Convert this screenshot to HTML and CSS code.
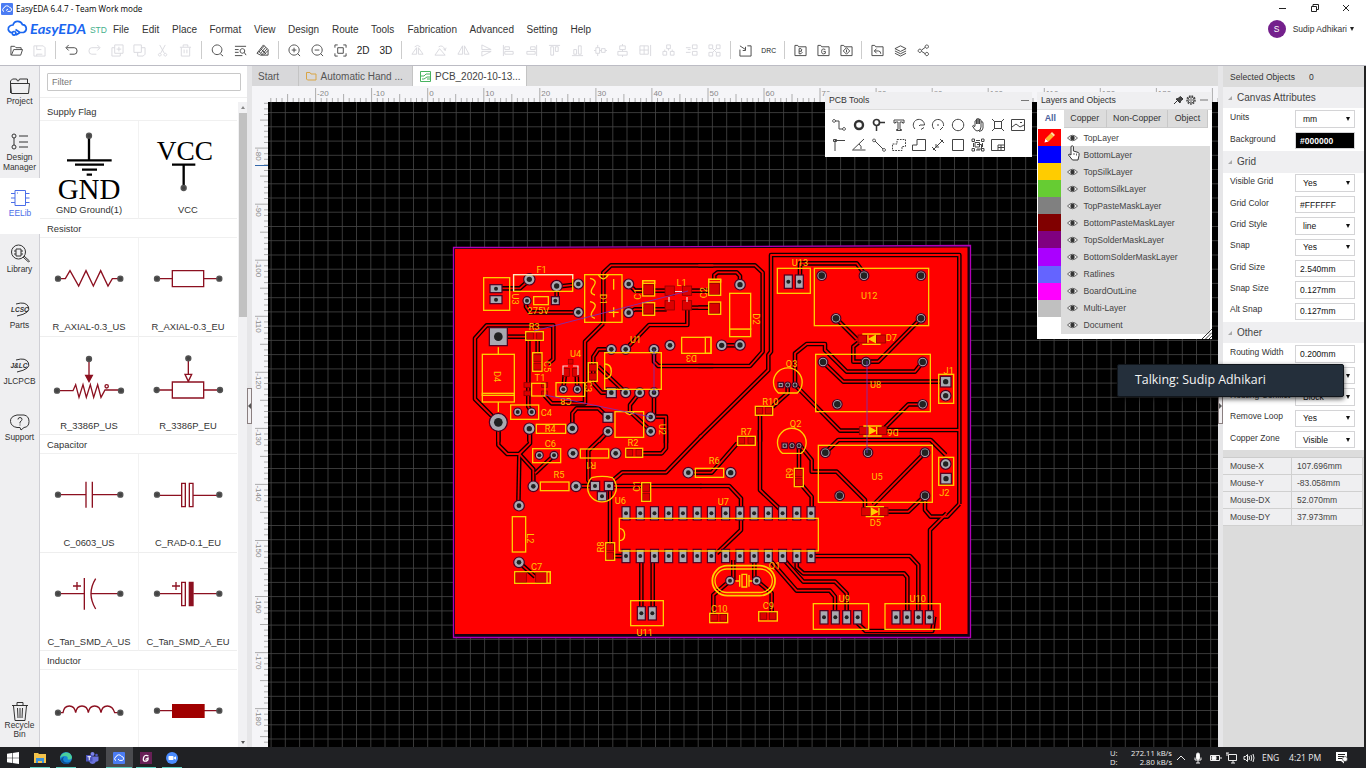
FILE: index.html
```html
<!DOCTYPE html>
<html lang="en">
<head>
<meta charset="utf-8">
<title>EasyEDA 6.4.7 - Team Work mode</title>
<link rel="stylesheet" href="styles.css">
</head>
<body>
<div class="app">
<header class="titlebar">
  <svg class="appicon" viewBox="0 0 12 12"><rect width="12" height="12" rx="1" fill="#4b7cf3"/><path d="M3 8.500a1.800 1.800 0 0 1 0-3.500 3 3 0 0 1 5.600-.5 2 2 0 0 1 .6 3.900H6.500M5 7.500l2-1.500" fill="none" stroke="#fff"/></svg>
  <span class="title">EasyEDA 6.4.7 - Team Work mode</span>
  <div class="winbtns"><svg width="80" height="14" viewBox="0 0 80 14" fill="none" stroke="#222"><path d="M0 6.500h7M32.500 4.500h5v5h-5zM34 4V2.500h5.500v5H38M64 3l6 6M70 3l-6 6"/></svg></div>
</header>
<nav class="menubar">
  <svg class="logo" viewBox="0 0 84 18"><path d="M7 12.500a3.800 3.800 0 0 1-4.500-5Q4 5 7 5a5 5 0 0 1 9.500-.3 4 4 0 0 1 1 7.800H14L9.500 9.500M8 11.500a1.800 1.800 0 1 0 .1 0M14 12.500l-4 2.500" fill="none" stroke="#1a66f0" stroke-width="1.700"/><text x="24" y="13.500" textLength="56" lengthAdjust="spacingAndGlyphs">EasyEDA</text></svg>
  <span class="std">STD</span>
  <div class="menus"><span style="width:29px">File</span><span style="width:30px">Edit</span><span style="width:37.500px">Place</span><span style="width:44.500px">Format</span><span style="width:34px">View</span><span style="width:44px">Design</span><span style="width:39px">Route</span><span style="width:36.500px">Tools</span><span style="width:62px">Fabrication</span><span style="width:57px">Advanced</span><span style="width:44px">Setting</span><span>Help</span></div>
  <div class="user"><b class="avatar">S</b><span>Sudip Adhikari</span><i class="tri"></i></div>
</nav>
<div class="toolbar" id="toolbar"></div>

<main class="main">
<aside class="rail" id="rail"></aside>
<section class="lib">
  <div class="filterbox"><div class="filter">Filter</div></div>
  <div class="libbody">
    <div class="liblist" id="liblist"></div>
    <div class="scroll"><i class="up"></i><div class="thumb"></div><i class="down"></i></div>
  </div>
</section>
<div class="split"><div class="handle"><i class="hl"></i></div></div>
<section class="center">
  <div class="tabs">
    <div class="tab t1">Start</div>
    <div class="tab t2"><svg width="11" height="10" viewBox="0 0 11 10"><path d="M.5 8V1.500h3.500l1 1.500H10v6H1.500z" fill="none" stroke="#d9a545"/></svg>Automatic Hand ...</div>
    <div class="tab on"><svg width="11" height="11" viewBox="0 0 11 11" fill="none" stroke="#48b35f"><path d="M.5.500h10v10H.5zM1 5h3l2-2h4M2 8h2l3-2h3M7 8h3"/></svg>PCB_2020-10-13...</div>
  </div>
  <div class="work">
    <svg id="board" width="966" height="661" viewBox="252 86 966 661"></svg>
    <div class="panel pcbtools">
      <div class="phead"><span>PCB Tools</span><i class="dash"></i></div>
      <div class="tools" id="tools"></div>
    </div>
    <div class="panel layers">
      <div class="phead"><span>Layers and Objects</span><svg class="pin" width="36" height="12" viewBox="0 0 36 12"><path d="M1 10l3-3M3 5l4 4 .5-2L10 5l-2.500-2.500L5 4.500z" stroke="#333" fill="#444"/><circle cx="18" cy="6" r="4" stroke="#444" fill="none" stroke-width="1.500" stroke-dasharray="1.700 1"/><circle cx="18" cy="6" r="3" stroke="#555" fill="none"/><circle cx="18" cy="6" r="1.300" stroke="#444" fill="none" stroke-width=".7"/><path d="M27 6h8" stroke="#777"/></svg></div>
      <div class="ltabs"><b>All</b><span class="w43">Copper</span><span class="w61">Non-Copper</span><span class="w39">Object</span></div>
      <div class="lrows" id="lrows"></div>
      <svg class="grip" width="10" height="10" viewBox="0 0 10 10"><path d="M0 10L10 0M3.500 10L10 3.500M7 10l3-3" stroke="#333"/></svg>
    </div>
    <svg class="cursor" width="14" height="18" viewBox="0 0 14 18"><path d="M4 9V2.500q1.200-1.500 2.400 0V7l5 1.500q1 .5.600 3l-1 4.500H5.500L1.500 11q0-2 2.500 0z" fill="#fff" stroke="#333"/><path d="M7 9v2M9.500 9.500v2" stroke="#666"/></svg>
  </div>
</section>
<div class="split s2"><div class="handle"><i class="hr"></i></div></div>
<aside class="props" id="props"></aside>
</main>

<div class="toast">Talking: Sudip Adhikari</div>

<footer class="taskbar">
  <div class="apps">
    <span class="task nou"><svg width="12" height="12" viewBox="0 0 12 12" fill="#fff"><path d="M0 1.700l5-.7v4.700H0zM5.600.9L12 0v5.700H5.600zM0 6.300h5V11l-5-.7zM5.600 6.300H12V12l-6.400-.9z"/></svg></span>
    <span class="task"><svg width="12" height="12" viewBox="0 0 12 12"><path d="M0 1h4l1 1h7v9H0z" fill="#f3c34c"/><path d="M2 6h8v5H8V9H4v2H2z" fill="#3c93dc"/></svg></span>
    <span class="task"><svg width="12" height="12" viewBox="0 0 12 12"><circle cx="6" cy="6" r="6" fill="#1686d8"/><path d="M0 6C1 0 10-2 12 5c0 3-4 3-4.500 2C9 4 4 2.500 0 6" fill="#4bcf9b"/><path d="M3 7c0 3 4 5 8 2-2 5-9 4-10-1 0-2 2-3 3-3" fill="#0d4f94"/></svg></span>
    <span class="task nou"><svg width="13" height="12" viewBox="0 0 13 12"><circle cx="6.500" cy="2" r="2" fill="#7b83eb"/><circle cx="10.500" cy="3" r="1.300" fill="#5059c9"/><path d="M3 4.500h9.500v4q-1 1.500-2.500 1-1 2.500-3.500 2.500T3 9z" fill="#6b73dd"/><rect y="3" width="6.500" height="6.500" fill="#4b53bc"/><path d="M1.500 4.700H5M3.250 4.700V8.300" stroke="#fff"/></svg></span>
    <span class="task cur"><svg width="12" height="12" viewBox="0 0 12 12"><rect width="12" height="12" rx="1" fill="#4b7cf3"/><path d="M3 8.500a1.800 1.800 0 0 1 0-3.500 3 3 0 0 1 5.600-.5 2 2 0 0 1 .6 3.900H6.500L5 7" fill="none" stroke="#fff"/></svg></span>
    <span class="task"><svg width="12" height="12" viewBox="0 0 12 12"><rect width="12" height="12" fill="#682057"/><path d="M8.500 4q-4-2-5 2t3 3q2-.5 1.500-3L5.500 7.500" fill="none" stroke="#fff" stroke-width="1.300"/></svg></span>
    <span class="task"><svg width="12" height="12" viewBox="0 0 12 12"><circle cx="6" cy="6" r="6" fill="#4a8cff"/><rect x="2.500" y="4" width="5" height="4" rx=".7" fill="#fff"/><path d="M8 5.500l2-1.300v3.600L8 6.500" fill="#fff"/></svg></span>
  </div>
  <div class="tray">
    <div class="net"><span>U:</span><span>272.11 kB/s</span><span>D:</span><span>2.80 kB/s</span></div>
    <svg width="78" height="14" viewBox="0 0 78 14" fill="none" stroke="#eee"><path d="M0 9l4-4 4 4"/><rect x="19.500" y="2" width="3" height="6.500" rx="1.500" fill="#fff"/><path d="M18 6.500v2.500h6V6.500M21 9v3M19 12h4M33.500 4.500h9v5h-9zM44 6v2"/><path d="M35 5.500h4v3h-4z" fill="#fff"/><path d="M51.500 3.500h8v6h-8zM54 12h4M56 10v2M50 2v3M49 2h3M67 5.500h1.500l2-2v7l-2-2H67zM72 5q1 2 0 4M74 4q1.500 3 0 6M76 3q2 4 0 8"/></svg>
    <span class="eng">ENG</span><span class="clock">4:21 PM</span>
    <svg class="notif" width="14" height="13" viewBox="0 0 14 13"><path d="M1 1h11v9H9v2.500L6 10H1z" fill="#fff"/><path d="M3 3.500h7M3 5.500h6M3 7.500h4" stroke="#222"/><circle cx="10" cy="8" r="2.500" fill="#fff" stroke="#222" stroke-width=".6"/></svg>
  </div>
</footer>
</div>
<script src="app.js"></script>
</body>
</html>
```

FILE: styles.css
```css
* { box-sizing: border-box; }
body { margin: 0; width: 1366px; height: 768px; overflow: hidden; background: #fff; font-family: "Liberation Sans", Arial, sans-serif; font-size: 10px; color: #333; }
.app { position: relative; width: 1366px; height: 768px; display: flex; flex-direction: column; overflow: hidden; }
svg { display: block; flex: none; }
.titlebar { height: 17px; display: flex; align-items: center; padding: 0 7px 0 1px; color: #000; }
.appicon { width: 12px; height: 12px; margin-right: 3px; }
.title { font: 8.100px "Open Sans", "Noto Sans", sans-serif; }
.winbtns { margin-left: auto; }
.menubar { height: 24px; display: flex; align-items: center; font-size: 10px; padding: 0 12px 0 6px; }
.logo { width: 84px; height: 18px; }
.logo text { font: italic bold 12.500px "Lato", sans-serif; fill: #1a66f0; }
.std { color: #45b08c; font-size: 8.500px; width: 23px; padding-top: 2px; letter-spacing: -.1px; }
.menus { display: flex; padding-top: 1px; }
.menus span { flex: none; }
.user { margin-left: auto; display: flex; align-items: center; font-size: 8.500px; padding-bottom: 1px; }
.avatar { width: 18px; height: 18px; border-radius: 9px; background: #74208c; color: #fff; font-weight: normal; text-align: center; line-height: 18px; margin-right: 7px; }
.tri { border: 2.500px solid transparent; border-top: 4px solid #222; border-bottom: 0; margin-left: 3px; }
.toolbar { height: 24px; display: flex; align-items: center; padding: 0 0 6px 5.600px; color: #222; }
.tb { width: 22.800px; display: flex; justify-content: center; flex: none; font-size: 10px; }
.tb svg, .tool svg { width: 14px; height: 14px; fill: none; stroke: #444; stroke-width: 1; }
.tb svg { width: 13px; height: 13px; }
.tb.off svg { stroke: #d8d8de; }
.tb small { font-size: 6.800px; }
.sep { width: 9px; height: 18px; display: flex; justify-content: center; }
.sep::before { content: ""; width: 1px; background: #ccc; }
.main { height: 682px; display: flex; border-top: 1px solid #bcbcc4; flex: none; }
.rail { width: 40px; background: #efeff1; border-right: 1px solid #d0d0d6; display: flex; flex-direction: column; }
.ri { height: 56px; padding-top: 10px; display: flex; flex-direction: column; align-items: center; font-size: 8.400px; line-height: 10px; text-align: center; white-space: pre-line; width: 39px; flex: none; }
.ri svg { width: 22px; height: 20px; fill: none; stroke: #333; margin-bottom: 0; }
.ri svg text { font: italic bold 6.500px "Liberation Sans", sans-serif; fill: #333; stroke: none; }
.ri.sel { background: #fff; color: #4b6ee8; width: 40px; }
.ri.sel svg { stroke: #4b6ee8; }
.ri.bin { margin-top: auto; height: 56px; line-height: 9px; }
.lib { width: 207px; display: flex; flex-direction: column; }
.filterbox { height: 31.500px; padding: 6.500px 7px; border-bottom: 1px solid #eee; }
.filter { width: 194px; height: 18px; border: 1px solid #c8c8c8; border-radius: 1px; font-size: 9px; line-height: 16px; padding-left: 4px; color: #777; }
.libbody { flex: 1; display: flex; min-height: 0; }
.liblist { width: 198px; overflow: hidden; padding-top: 4px; }
.lh { height: 19px; line-height: 19px; padding-left: 7px; font-size: 9.400px; border-bottom: 1px solid #f0f0f0; }
.lrow { display: flex; height: 98.500px; }
.cell { width: 99px; height: 98.500px; border-right: 1px solid #f2f2f2; border-bottom: 1px solid #eee; display: flex; flex-direction: column; align-items: center; }
.cell svg { width: 99px; height: 82px; fill: none; stroke: #8c1020; stroke-width: 4; overflow: visible; }
.cell svg text { font: 87px "Liberation Serif", serif; fill: #000; stroke: none; }
.cell svg text.vcc { font-size: 82px; }
.cell span { font-size: 9.400px; line-height: 14px; white-space: nowrap; }
.scroll { width: 9px; margin: 4px 0 0 1px; background: #f1f1f3; display: flex; flex-direction: column; align-items: center; }
.up { border: 2.500px solid transparent; border-bottom: 3px solid #888; border-top: 0; margin: 4px 0 4px; }
.thumb { width: 8px; height: 204px; background: #c1c1c1; }
.down { border: 2.500px solid transparent; border-top: 3px solid #555; border-bottom: 0; margin-top: auto; margin-bottom: 3px; }
.split { width: 5px; flex: none; background-color: #e6e6e8; background-image: radial-gradient(#aaa 30%, transparent 35%); background-size: 2px 3px; padding-top: 322px; }
.handle { height: 36px; border: 1px solid #8a7f80; background: #f2f0f2; display: flex; align-items: center; }
.hl { border: 3px solid transparent; border-left: 0; border-right-color: #555; }
.hr { border: 3px solid transparent; border-right: 0; border-left-color: #555; }
.center { width: 966px; flex: none; }
.tabs { height: 20px; background: #dcdcdc; display: flex; font-size: 10px; }
.tab { display: flex; align-items: center; gap: 4px; background: #d8d8da; border-right: 1px solid #c4c4c4; height: 20px; color: #555; padding-top: 0; white-space: nowrap; }
.t1 { width: 46.500px; padding-left: 6px; }
.t2 { width: 114.500px; padding-left: 7px; }
.on { width: 114px; padding-left: 7px; background: #fff; gap: 4px; color: #444; }
.work { position: relative; height: 661px; }
.panel { position: absolute; background: #fff; font-size: 8.600px; }
.phead { height: 17.500px; background: #efeff1; border-bottom: 1px solid #ddd; display: flex; align-items: center; padding: 0 3px 0 4px; font-size: 8.700px; }
.phead span { flex: 1; }
.dash { width: 8px; height: 1px; background: #777; }
.pcbtools { left: 573px; top: 6px; width: 207px; height: 65px; }
.tools { display: flex; flex-wrap: wrap; padding: 5.500px 0 0 4px; }
.tool { width: 19.900px; height: 19.800px; display: flex; justify-content: center; align-items: center; }
.tool svg { stroke: #444; }
.layers { left: 785px; top: 6px; width: 174.500px; height: 247px; }
.ltabs { display: flex; height: 18px; line-height: 17px; text-align: center; margin-bottom: 1.500px; font-size: 8.800px; }
.ltabs b { width: 26.500px; color: #4a5f9c; }
.ltabs span { background: #dcdcdc; border-right: 1px solid #c8c8c8; border-bottom: 1px solid #ccc; }
.w43 { width: 43.500px; } .w61 { width: 61px; } .w39 { width: 40px; }
.lrows { width: 173px; padding-left: .5px; }
.lr { display: flex; align-items: center; height: 17.070px; background: #dcdcdc; color: #444; }
.lr:first-child { background: #fff; }
.sw { width: 23px; height: 17.070px; margin-right: 6px; padding: 3px 0 0 6px; }
.lr > svg { margin-right: 6px; }
.lr.hover > svg { visibility: hidden; }
.grip { position: absolute; right: 0; bottom: 0; }
.cursor { position: absolute; left: 815px; top: 58px; }
.props { width: 143px; background: #dcdcdc; border-right: 2px solid #222; font-size: 8.500px; }
.selobj { height: 21.200px; display: flex; align-items: center; padding-left: 7px; gap: 14px; letter-spacing: .05px; }
.ph { height: 21.300px; background: #efeff1; display: flex; align-items: center; padding-left: 5px; font-size: 10px; color: #444; letter-spacing: .03px; }
.ph::before { content: ""; border: 2.500px solid transparent; border-right-color: #aaa; border-bottom-color: #aaa; margin-right: 5px; }
.pg { background: #fff; }
.pr { height: 21.380px; display: flex; padding-left: 7px; align-items: center; }
.pr label { width: 65px; padding-bottom: 4px; }
.ctl { width: 60px; height: 17.500px; border: 1px solid #d4d4d6; display: flex; align-items: center; padding-left: 4px; color: #111; letter-spacing: .02px; }
.ctl.sel { padding: 0 4px 0 7px; justify-content: space-between; }
.ctl.sel::after { content: ""; margin-left: auto; border: 2.500px solid transparent; border-top: 4px solid #111; border-bottom: 0; }
.ctl.blk { background: #000; color: #fff; font-weight: bold; }
.mouse { margin-top: 6.500px; display: grid; grid-template-columns: 69px 71px; grid-auto-rows: 17.100px; border-top: 1px solid #ccc; }
.mouse span { background: #efeff1; border-bottom: 1px solid #d0d0d0; border-right: 1px solid #d0d0d0; padding-left: 7px; line-height: 17px; color: #444; }
.mouse span:nth-child(even) { padding-left: 5px; }
.toast { position: absolute; left: 1117px; top: 364px; width: 227px; height: 33px; background: #242f3b; border: 1px solid #11161c; border-radius: 2px; box-shadow: 0 2px 5px rgba(0,0,0,.7); color: #f4f4f4; font: 12.400px/30px "Open Sans", sans-serif; padding-left: 17px; }
.taskbar { height: 21px; background: #202124; color: #eee; display: flex; justify-content: space-between; font: 9px "Open Sans", sans-serif; }
.apps { display: flex; }
.task { width: 26.500px; height: 21px; display: flex; justify-content: center; align-items: center; background: linear-gradient(#62cfc0, #62cfc0) bottom / 20px 1.500px no-repeat; }
.task.nou { background: none; }
.task.cur { background: linear-gradient(#62cfc0, #62cfc0) bottom / 26px 1.500px no-repeat #4a4b4f; }
.tray { display: flex; align-items: center; width: 256px; }
.net { display: grid; grid-template-columns: 20px 42px; font-size: 7.600px; line-height: 9px; width: 67px; }
.net span:nth-child(even) { text-align: right; white-space: nowrap; }
.eng { margin-left: 7px; font-size: 8.500px; width: 27px; }
.clock { font-size: 8.600px; white-space: nowrap; width: 46px; }
.silktxt { font: 9.300px "Roboto", "Liberation Sans", sans-serif; fill: #ffc400; text-anchor: middle; }
.ruler { font: 8px "Liberation Sans", sans-serif; fill: #888; }
```

FILE: app.js
```js
const byId = id => document.getElementById(id);
const svg = (d, extra = '') => `<svg viewBox="0 0 14 14"><path d="${d}"/>${extra}</svg>`;

/* main toolbar: leading "-" marks disabled, "|" a separator */
const bar = [
  'M1 12V2.500h4l1.500 1.500H12V6M1.500 12L4 6h9.500l-2 6z', '-M1 2h10l2 2v9H1zM4 2v4h5M4 13v-2h6', '|',
  'M4 1L1 4l3 3M1.500 4H10q3 0 3 3.500T10 11H5', '-M10 1l3 3-3 3M12.500 4H4Q1 4 1 7.500T4 11h5', '-M4 1h9v9H4zM4 4H1v9h9v-3M8.500 3v5M6 5.500h5', '-M1 1h8v8H1zM9 4h4v7l-2 2H5V9', '-M4 1l5 9M10 1L5 10M4 10a1.500 1.500 0 1 0 .1 0M10 10a1.500 1.500 0 1 0 .1 0', '-M1 3.500h12M4.500 3V1h5v2M2.500 4v9h9V4M5.500 6v4M8.500 6v4', '|',
  'M6.500 1a5.200 5.200 0 1 0 .1 0M10 10.500l3 2.500', 'M1 2.500h12M1 6h4M1 9h4M1 12.500h8M9 5a2.500 2.500 0 1 0 .1 0M11 9l2 3', 'M1 10l7-9 5 5v6H5zM3 9l6-7M5 10l5.500-6.500M6 12l6-7M8 12l5-5M3 8l4 4M5 5l6 6', '|',
  'M6.500 1a5.500 5.500 0 1 0 .1 0M4 6.500h5M6.500 4v5M10.500 10.500L13 13', 'M6.500 1a5.500 5.500 0 1 0 .1 0M4 6.500h5M10.500 10.500L13 13', 'M1 4V1h3M10 1h3v3M13 10v3h-3M4 13H1v-3M4 4h6v6H4z', '#2D', '#3D', '|',
  '-M1 11h5V4zM8 11h5L8 4zM4 3q3-3 6 0', '-M1 12h11L6 5zM5 3q5-3 7 4M10 5l2 2 1-3', '-M1 11h5V2zM8 11h5L8 2z', '-M2 1l10 5H2zM2 8h10L2 13z', '-M1.500 1v12M3 3h5v3H3zM3 8h9v3H3z', '-M12.500 1v12M6 3h5v3H6zM2 8h9v3H2z', '-M1 1.500h12M3 3h3v9H3zM8 3h3v5H8z', '-M1 12.500h12M3 6h3v5H3zM8 2h3v9H8z', '-M0 7h2M12 7h2M6 7h2M2 4h4v6H2zM8 5h4v4H8zM4 1v3M4 10v3', '-M7 0v2M7 12v2M4 2h6v4H4zM2 8h10v4H2zM7 6v2', '-M1 2h9v9H1zM5.500 2v9M1 6.500h9M12.500 1v12', '-M5 1h4v4H5zM1 8h4v4H1zM9 8h4v4H9zM7 5v2M3 8V6M11 8V6', '-M8 1h5v4H8zM8 8h5v4H8zM1 4h5M1 9h5M3 6h3', '-M1 1h4v4H1zM9 1h4v4H9zM1 9h4v4H1zM9 9h4v4H9zM5 5l4 4M9 5L5 9', '|',
  'M1 6v7h12V2H9M1 2l6 4M7 3v4H4', '@DRC', '|',
  'M1 12.500V1.500h3l1 1.500h8v9.500zM5.500 5v5.500h2q2.500-1.300 0-2.700 2-1.500 0-2.800zM5.500 7.800h2', 'M1 12.500V1.500h3l1 1.500h8v9.500zM9 6q-4-2-4 2t4 2V8H7', 'M1 12.500V1.500h3l1 1.500h8v9.500zM7 4l3.500 3.500L7 11 3.500 7.500zM7 6v3', '|',
  'M1 12.500V1.500h3l1 1.500h8v9.500zM6 5L3.500 7.500 6 10M4 7.500h4q2.500 0 2.500 3', 'M1 5l6-3 6 3-6 3zM1 7.500l6 3 6-3M1 10l6 3 6-3', 'M3 5.500a1.800 1.800 0 1 0 .1 0M10.500 1a1.800 1.800 0 1 0 .1 0M10.500 9a1.800 1.800 0 1 0 .1 0M5 6.500L9 3.500M5 8l4 2.500'
];
byId('toolbar').innerHTML = bar.map(b => {
  if (b === '|') return '<i class="sep"></i>';
  if (b[0] === '#') return `<span class="tb">${b.slice(1)}</span>`;
  if (b[0] === '@') return `<span class="tb"><small>${b.slice(1)}</small></span>`;
  return b[0] === '-' ? `<span class="tb off">${svg(b.slice(1))}</span>` : `<span class="tb">${svg(b)}</span>`;
}).join('');

/* PCB tools palette */
byId('tools').innerHTML = [
  svg('M3 3h4v8h4M2 1.500a1.400 1.400 0 1 0 .1 0M12 9.500a1.400 1.400 0 1 0 .1 0'),
  svg('', '<circle cx="7" cy="7" r="4" stroke="#333" stroke-width="2.400"/>'),
  svg('', '<circle cx="4.500" cy="4.500" r="3" stroke="#333" stroke-width="1.700"/><path d="M7 4.500h6M4.500 7v6" stroke="#333" stroke-width="1.500"/>'),
  svg('M2 2h10v3h-1.500V4H8v7.500h1.500v1h-5v-1H6V4H3.500v1H2z'),
  svg('M3 11a5.600 5.600 0 1 1 9.500-4H8M8 7l-1 1M12 9.500l-3 2'), svg('M3 11a5.600 5.600 0 1 1 9.500-3M12 9l-3 3M7 6v2'),
  svg('M7 1.300a5.700 5.700 0 1 0 .1 0'),
  svg('M4 8V3q1-1 1.500 0v3-5q1-1 1.500 0v5-5q1-1 1.500 0v5-4q1-1 1.500 0v7q0 4-4 4Q4 13 1.500 8q1-2 2.500 1M10 4q2-1 2 1v5q0 3-4 3.500'),
  svg('M3.500 3.500h7v7h-7zM1 1l3 3M13 1l-3 3M1 13l3-3M13 13l-3-3'),
  svg('M.5 1.500h13v11H.5zM1 9l4-3 4 3 4-2M9 4.500h2'),
  svg('M3 13V2.500h10M1.500 1.500h3v2h-3z'), svg('M12 1L.5 12h13M7 6q3 2 2 5'), svg('M3 3l8 8M2 1a1.400 1.400 0 1 0 .1 0M12 10.500a1.400 1.400 0 1 0 .1 0'),
  '<svg viewBox="0 0 14 14"><path stroke-dasharray="1.800 1" d="M5 1.500h8.500v7H10v4H.5V6H5z"/></svg>',
  svg('M.5 12.500V7H5V1.500h8.500v11z'), svg('M2 12L12 2M1 9l4 4M9 1l4 4M5 6v3h3'), svg('M1.500 1.500h11v11h-11z'),
  svg('M1 1h2.500v2.500H1zM10.500 1H13v2.500h-2.500zM1 10.500h2.500V13H1zM10.500 10.500H13V13h-2.500zM4 4.500h4.500V9H4zM6 6.500h4.500V11H6M5 2.500h4M2.500 5v4M11.500 5v4M5 12h4'), svg('M.5 1.500h13v11H.5zM7 7h6.500M7 9.500h6.500M7 7v5.500M10 7v5.500')
].map(s => `<span class="tool">${s}</span>`).join('');

byId('lrows').innerHTML = [['TopLayer', '#ff0000'], ['BottomLayer', '#0000ff'], ['TopSilkLayer', '#ffcc00'], ['BottomSilkLayer', '#66cc33'], ['TopPasteMaskLayer', '#808080'], ['BottomPasteMaskLayer', '#800000'], ['TopSolderMaskLayer', '#800080'], ['BottomSolderMaskLayer', '#aa00ff'], ['Ratlines', '#6464ff'], ['BoardOutLine', '#ff00ff'], ['Multi-Layer', '#c0c0c0'], ['Document', '#ffffff']]
  .map(([n, c], i) => `<div class="lr${i === 1 ? ' hover' : ''}"><div class="sw" style="background:${c}">${i ? '' : '<svg width="11" height="11" viewBox="0 0 11 11"><path d="M.5 10.500l1-4 3 3z" fill="#fff"/><path d="M1.500 6.500l5-5 3 3-5 5z" fill="#ffb52e"/><path d="M6.500 1.500L8 0l3 3-1.500 1.500z" fill="#ffe0a0"/></svg>'}</div><svg width="11" height="8" viewBox="0 0 11 8"><path d="M.5 4q5-5.500 10 0-5 5.500-10 0z" fill="#eee" stroke="#444" stroke-width=".8"/><circle cx="5.500" cy="4" r="2.200" fill="#333"/></svg>${n}</div>`).join('');

/* left rail */
const rail = [
  ['Project', '<path d="M1.500 17V5l2-2h4l1 2h1l1-2h8v4M1.500 7.500h19l-1 10h-17z"/>'],
  ['Design\nManager', '<circle cx="5" cy="4" r="2"/><circle cx="5" cy="15" r="2"/><path d="M5 6v7M10 4h9M10 10h9M10 15h9"/>'],
  ['EELib', '<path d="M6 2.500h10.500v15H6zM2 5.500h4M2 10h4M2 14.500h4M16.500 5.500h4M16.500 10h4M16.500 14.500h4M8 5h1"/>'],
  ['Library', '<circle cx="9.500" cy="8" r="7"/><path d="M7 5h5v7H7zM5 7h2M5 10h2M12 7h2M12 10h2M14 13l5.500 5 1-1-5.500-5"/>'],
  ['Parts', '<text x="2" y="12">LCSC</text><path d="M7 4q10-3 12.500 3T8 16"/>'],
  ['JLCPCB', '<text x="1.500" y="12">J&amp;LC</text><path d="M7 4q10-3 12.500 3T8 16"/>'],
  ['Support', '<path d="M8 15.500q-6-1-6.500-6T8 3h7q5 1 5 6.500t-5 6l-3 2.500-1-2.500zM9 7.500q0-2 2-2t2 2q0 1-2 2.500v1.500M11 12.500v1"/>'],
  ['Recycle\nBin', '<path d="M3 4.500h16M8 4V1.500h6V4M4.500 5l1.500 14.500h10L17.500 5M8.500 7l.5 10M11 7v10M13.500 7L13 17"/>']
];
byId('rail').innerHTML = rail.map(([n, p], i) => `<div class="ri${i === 2 ? ' sel' : ''}${i === 7 ? ' bin' : ''}"><svg viewBox="0 0 22 20">${p}</svg>${n}</div>`).join('');

/* component library */
const dot = (x, y) => `<circle cx="${x}" cy="${y}" r="7.500" fill="#444" stroke="#555"/>`;
const ends = `${dot(54, 122)}${dot(241, 122)}`;
const lib = [
  ['Supply Flag', [
    ['GND Ground(1)', `<g stroke="#000" stroke-width="7"><path d="M147 45v73M81 118h134M105 131h87M126 146h45M140 161h16"/></g>${dot(147, 44)}<text x="53" y="234" textLength="188">GND</text>`],
    ['VCC', `<text class="vcc" x="53" y="116" textLength="169">VCC</text><path d="M99 131h70M134 131v70" stroke="#000" stroke-width="7"/>${dot(134, 201)}`]]],
  ['Resistor', [
    ['R_AXIAL-0.3_US', `<path d="M54 122h22l14-24 26 46 22-46 22 46 22-46 22 46 13-22h24"/>${ends}`],
    ['R_AXIAL-0.3_EU', `<path d="M54 122h46M194 122h46M100 98h94v48h-94z"/>${ends}`]], [
    ['R_3386P_US', `<path d="M54 161h45l8-18 10 38 12-38 10 38 12-38 10 38 12-38 10 38 12-22h46M147 66v56"/><path d="M137 115h20l-10 19z" fill="#8c1020"/><circle cx="200" cy="148" r="5"/>${dot(147, 66)}${dot(51, 161)}${dot(243, 161)}`],
    ['R_3386P_EU', `<path d="M54 159h46M194 159h46M100 135h94v48h-94zM148 66v46M138 112h20l-10 21z"/>${dot(148, 64)}${dot(53, 159)}${dot(243, 159)}`]]],
  ['Capacitor', [
    ['C_0603_US', `<path d="M54 122h84M157 122h84M138 83v78M157 83v78"/>${ends}`],
    ['C_RAD-0.1_EU', `<path d="M54 124h74M163 124h77M128 88h11v70h-11zM151 88h11v70h-11z"/>${ends}`]], [
    ['C_Tan_SMD_A_US', `<path d="M54 122h79M151 122h90M133 75v95M167 77q-28 45 0 91M99 99h24M111 87v24"/>${ends}`],
    ['C_Tan_SMD_A_EU', `<path d="M54 122h74M163 122h77M128 88h11v70h-11zM99 99h24M111 87v24"/><path d="M151 88h11v70h-11z" fill="#8c1020"/>${ends}`]]],
  ['Inductor', [
    ['', `<path d="M54 128h15q3-20 19-20t19 20q3-20 19-20t19 20q3-20 19-20t19 20q3-20 19-20t22 20h12"/>${dot(54, 128)}${dot(241, 128)}`],
    ['', `<path d="M54 122h187"/><path d="M101 104h94v38h-94z" fill="#a00000" stroke="#a00000"/>${ends}`]]]
];
byId('liblist').innerHTML = lib.map(([h, ...rows]) => `<div class="lh">${h}</div>` + rows.map(r => `<div class="lrow">${r.map(([n, p]) => `<div class="cell"><svg viewBox="0 0 297 246">${p}</svg><span>${n}</span></div>`).join('')}</div>`).join('')).join('');

/* property panel */
const groups = [
  ['Canvas Attributes', [['Units', 'mm', 'sel'], ['Background', '#000000', 'blk']]],
  ['Grid', [['Visible Grid', 'Yes', 'sel'], ['Grid Color', '#FFFFFF', ''], ['Grid Style', 'line', 'sel'], ['Snap', 'Yes', 'sel'], ['Grid Size', '2.540mm', ''], ['Snap Size', '0.127mm', ''], ['Alt Snap', '0.127mm', '']]],
  ['Other', [['Routing Width', '0.200mm', ''], ['', '', 'sel'], ['Routing Conflict', 'Block', 'sel'], ['Remove Loop', 'Yes', 'sel'], ['Copper Zone', 'Visible', 'sel']]]
];
byId('props').innerHTML = '<div class="selobj"><span>Selected Objects</span><span>0</span></div>' +
  groups.map(([h, rs]) => `<div class="ph">${h}</div><div class="pg">${rs.map(([l, v, c]) => `<div class="pr"><label>${l}</label><div class="ctl ${c}">${v}</div></div>`).join('')}</div>`).join('') +
  '<div class="mouse">' + [['Mouse-X', '107.696mm'], ['Mouse-Y', '-83.058mm'], ['Mouse-DX', '52.070mm'], ['Mouse-DY', '37.973mm']].map(([a, b]) => `<span>${a}</span><span>${b}</span>`).join('') + '</div>';

/* board: each quadrant has its own origin, three units per pixel */
const org = { a: [450, 240], b: [450, 430], c: [700, 240], d: [700, 430] };
const X = (q, x) => +(org[q][0] + x / 3).toFixed(2), Y = (q, y) => +(org[q][1] + y / 3).toFixed(2);
const traces = {
  a: ['460,250 460,98 483,76 790,76', '460,250 405,305 405,490 305,490 282,465', '138,145 210,145 238,120', '320,140 385,133', '320,140 320,180', '228,182 228,200 240,217 385,217', '293,372 310,358 310,256 110,256 75,295 75,477 145,547 145,605', '145,290 235,290', '235,300 235,500 245,515', '263,300 263,340', '340,448 345,400', '382,448 380,400', '536,132 555,152 600,152', '536,218 555,208 600,208', '600,152 650,152', '600,208 650,208', '720,152 790,152', '720,203 790,203', '712,205 712,255 597,255 527,328', '484,328 445,328 430,350 430,430 455,458 484,458', '612,328 612,365 625,378 790,378', '445,380 527,458', '569,458 540,495 540,515 600,570', '612,458 612,530', '602,530 648,530 648,610', '367,565 367,520 380,505 445,505 473,532', '474,574 445,605', '238,566 238,605'],
  b: ['145,0 145,45 172,72 208,72 240,40 240,0', '208,72 205,227', '208,72 250,118 250,165', '312,76 255,130', '474,5 415,62 415,150 433,168', '648,0 648,55 635,70 560,70', '377,168 433,168', '477,168 755,168', '490,150 517,127 648,127 755,17', '480,180 480,345', '485,378 528,378', '574,378 574,550', '608,378 608,550', '207,397 255,440', '715,128 785,128 862,40'],
  c: ['-5,76 165,76 188,98 188,335 150,378 -5,378', '43,118 43,105 53,97 110,97 120,108 120,130', '65,316 120,316', '-5,203 30,203', '778,792 778,45 213,45 213,335 205,345 205,390 0,592', '300,125 300,70 470,70 492,100', '408,235 470,297', '663,235 535,365 460,365 460,320 475,308', '285,435 285,340 320,312 375,312 375,330 440,395 645,395 668,366', '369,366 430,425 737,425', '285,435 420,572 480,572', '263,440 263,460 218,500', '180,525 180,605', '668,493 625,493 555,563', '550,570 778,570'],
  d: ['180,0 180,180 248,245', '0,168 88,168 123,205 123,300 50,370', '300,47 335,90 335,125 410,125 495,210 495,240', '297,55 297,120', '305,165 335,200 335,245', '675,68 520,225', '565,245 625,245 675,197 675,240 692,260 742,260 778,222', '740,250 690,300 690,560', '376,68 415,30 692,30 737,75', '333,378 630,378 655,405 655,560', '290,385 290,412 310,430 612,430 622,442 622,560', '248,385 310,455 405,455 440,490 440,560', '205,385 290,482 390,482 405,500 405,560', '90,452 40,495 40,560', '170,452 215,490 215,550', '100,390 100,450', '163,390 163,450', '473,562 473,580 497,603 697,603 703,560']
};
let lines = '', silk = '', pads = '', txt = '';
for (const q in traces) for (const t of traces[q]) {
  const p = t.split(' ').map(s => { const [x, y] = s.split(',').map(Number); return X(q, x) + ',' + Y(q, y); }).join(' ');
  lines += `<polyline points="${p}"/>`;
}
/* silk rectangles: quadrant, x, y, w, h */
const rects = { a: '101,113,78,98 251,170,44,24 404,104,112,143 227,275,53,26 248,338,28,56 97,343,96,143 97,460,96,6 182,495,84,43 259,553,88,27 318,428,86,41 578,122,36,46 578,122,36,8 578,188,36,38 415,368,27,56 464,338,170,110 495,515,86,77 695,292,88,48 766,292,17,48 245,430,40,38',
  b: '248,56,84,42 391,57,85,27 527,55,51,27 271,156,86,26 187,260,40,106 194,425,107,35 291,425,10,35 575,158,27,56 467,338,27,53 508,265,597,98 542,512,98,75 736,115,85,27',
  c: '26,118,36,48 26,118,36,8 26,186,36,37 89,160,63,130 89,267,63,0.5 232,85,99,75 343,85,343,172 347,343,344,172 716,403,45,87 166,499,52,27',
  d: '113,19,53,27 283,115,27,55 355,46,342,171 716,82,45,84 340,521,166,77 555,521,166,77 29,550,54,28 176,545,56,28' };
for (const q in rects) for (const r of rects[q].split(' ')) { const [x, y, w, h] = r.split(',').map(Number); silk += `<rect x="${X(q, x)}" y="${Y(q, y)}" width="${w / 3}" height="${h / 3}"/>`; }
const path = (q, d, f = 'none') => `<g transform="translate(${org[q]}) scale(.3333)"><path d="${d}" fill="${f}" stroke-width="4"/></g>`;
silk += path('a', 'M420 115q25 5 10 25t5 25M420 185q25 5 10 25t5 25M491 117v32M476 217h30M491 202v30M145 322v21M145 486v30M445 104q15 25 30 0M464 372q20 0 20 22t-20 22M525 515q14 18 28 0');
silk += path('b', 'M425 143a43 43 0 1 0 62 0q-30-8-62 0M508 295q16 2 16 19t-16 18');
silk += path('c', 'M235 459a43 43 0 1 1 57 0zM487 282h55M487 313h55M504 286v22M490 558h55M490 588h55M530 561v22');
silk += path('c', 'M526 287l-18 10 18 10zM508 562l18 10-18 10z', '#ffd000');
silk += path('d', 'M247 70a43 43 0 1 1 57 0zM497 230h55M497 260h55M537 234v22M107 453h12M119 435v35M126 433h14v38h-14zM147 435v35M147 453h10');
silk += path('d', 'M514 235l18 10-18 10z', '#ffd000');
silk += `<rect x="${X('d', 37)}" y="${Y('d', 407)}" width="62.700" height="30" rx="15" stroke-width="1.800"/><rect x="${X('d', 45)}" y="${Y('d', 417)}" width="57.300" height="23.500" rx="11.700"/>`;
silk += `<rect x="${X('a', 191)}" y="${Y('a', 104)}" width="59" height="16.700"/>`;
/* copper lands of surface-mount parts */
const lands = { a: '645,138,28,28 697,138,28,28 645,182,28,28 697,182,28,28 581,134,30,30 581,192,30,30 222,428,20,14 222,453,20,14 275,428,18,14 275,453,18,14 250,344,24,20 250,370,24,20 340,385,18,24 368,385,18,24 417,373,22,20 417,400,22,20 355,358,14,14 230,278,20,20 260,278,18,20', b: '197,427,32,30 257,427,32,30 577,162,22,22 577,190,22,22 469,342,22,20 469,368,22,20 530,58,18,20 558,58,18,20', c: '28,130,30,34 28,190,30,30 474,285,26,24 530,285,26,24 478,560,26,24 534,560,26,24 168,502,20,20 196,502,20,20', d: '485,233,26,24 538,233,26,24 285,118,22,22 285,146,22,22 32,553,20,20 60,553,20,20 180,548,20,20 208,548,20,20 116,22,18,20 144,22,18,20' };
let land = '';
for (const q in lands) for (const r of lands[q].split(' ')) { const [x, y, w, h] = r.split(',').map(Number); land += `<rect x="${X(q, x)}" y="${Y(q, y)}" width="${w / 3}" height="${h / 3}"/>`; }
const circ = (q, x, y, r, h) => { pads += `<circle cx="${X(q, x)}" cy="${Y(q, y)}" r="${r / 3}"/><circle cx="${X(q, x)}" cy="${Y(q, y)}" r="${h / 3}" fill="#222" stroke="none"/>`; };
const rect = (q, x, y, w, h, o) => { pads += `<rect x="${X(q, x - w)}" y="${Y(q, y - h)}" width="${w * 2 / 3}" height="${h * 2 / 3}"/><circle cx="${X(q, x)}" cy="${Y(q, y)}" r="${o / 3}" fill="#222" stroke="none"/>`; };
const C = (q, s, r, h) => s.split(' ').forEach(p => circ(q, ...p.split(',').map(Number), r, h));
const R = (q, s, w, h, o) => s.split(' ').forEach(p => rect(q, ...p.split(',').map(Number), w, h, o));
C('a', '145,547', 27, 13); R('a', '145,290', 27, 27, 13); C('a', '238,118 320,138 238,566 367,565', 17, 8);
C('a', '385,132 385,217 536,132 536,218 484,328 527,328 612,328 660,316 527,458 569,458 612,458 602,531 602,574 474,574', 15, 7);
C('a', '340,448 382,448 203,516 245,516 231,182', 12, 6); R('a', '484,458 474,532', 15, 15, 7); R('a', '316,182', 12, 12, 6); R('a', '138,146 138,179', 18, 12, 6);
C('b', '268,76 312,76', 12, 6); C('b', '369,70 497,70 250,169 378,169 207,227 207,397 715,128', 16, 7); R('b', '435,168 477,168 456,199', 14, 14, 6); R('b', '574,550 607,550', 12, 20, 6);
for (let i = 0; i < 14; i++) for (const y of [250, 378]) rect('b', 528 + i * 42.7, y, 12, 20, 6);
C('c', '365,107 492,107 663,107 408,235 663,235 369,366 498,366 668,366 412,493 668,493', 14.5, 10); C('c', '120,134 120,315 65,316 737,467', 16, 8); R('c', '737,425', 16, 16, 8); R('c', '265,125 298,125', 12, 20, 6); C('c', '263,435 285,435', 9, 5); R('c', '242,435', 8, 8, 4);
C('d', '376,68 504,68 675,68 419,197 675,197', 14.5, 10); C('d', '737,102 92,128', 16, 8); R('d', '738,146', 16, 16, 8); C('d', '90,452 170,452', 13, 6); C('d', '276,47 297,47', 9, 5); R('d', '254,47', 8, 8, 4);
R('d', '372,562 406,562 440,562 473,562 588,562 621,562 655,562 688,562', 12, 20, 6);
/* designators: quadrant, x, y, text, rotation */
[['a', 275, 90, 'F1'], ['a', 195, 177, 'U3', 90], ['a', 265, 211, '275V'], ['a', 460, 178, 'D1', 90], ['a', 562, 162, 'C1', -90], ['a', 695, 129, 'L1'], ['a', 762, 158, 'C2', -90], ['a', 253, 261, 'R3'], ['a', 557, 299, 'U1'], ['a', 377, 342, 'U4'], ['a', 293, 380, 'C5', 90], ['a', 270, 413, 'T1'], ['a', 143, 410, 'D4', 90], ['a', 289, 518, 'C4'], ['a', 301, 567, 'R4'], ['a', 348, 484, 'C8', 180], ['a', 414, 440, 'C3', 90], ['a', 637, 568, 'U2', 90], ['a', 724, 355, 'D3', 180],
 ['b', 301, 41, 'C6'], ['b', 549, 39, 'R2'], ['b', 422, 105, 'R1', 180], ['b', 327, 134, 'R5'], ['b', 511, 212, 'U6'], ['b', 560, 168, 'C1', -90], ['b', 242, 325, 'L2', 90], ['b', 451, 351, 'R8', -90], ['b', 260, 411, 'C7'], ['b', 584, 609, 'U11'],
 ['c', 168, 237, 'D2', 90], ['c', 300, 69, 'U13'], ['c', 508, 167, 'U12'], ['c', 574, 294, 'D7'], ['c', 275, 370, 'Q3'], ['c', 527, 434, 'U8'], ['c', 746, 392, 'J1'], ['c', 211, 485, 'R10'], ['c', 287, 552, 'Q2'], ['c', 139, 574, 'R7'], ['c', 579, 577, 'D6', 180],
 ['d', 43, 93, 'R6'], ['d', 70, 215, 'U7'], ['d', 268, 130, 'R9', -90], ['d', 531, 140, 'U5'], ['d', 733, 187, 'J2'], ['d', 526, 278, 'D5'], ['d', 224, 407, 'Q1'], ['d', 58, 535, 'C10'], ['d', 205, 528, 'C9'], ['d', 433, 506, 'U9'], ['d', 653, 506, 'U10']
].forEach(([q, x, y, t, r]) => { txt += `<text transform="translate(${X(q, x)} ${Y(q, y)}) rotate(${r || 0})" y="3.300">${t}</text>`; });

let grid = '';
for (let k = -12; k < 57; k++) { const x = 427.7 + k * 14.237; if (x > 268 && x < 1218) grid += `M${x.toFixed(1)} 102V747`; }
for (let k = -4; k < 45; k++) { const y = 155.3 + k * 14.237; if (y > 102 && y < 747) grid += `M268 ${y.toFixed(1)}H1218`; }
let tick = '', nums = '';
for (let m = -28; m <= 141; m++) {
  const x = 427.7 + m * 5.605; if (x < 268) continue;
  tick += `M${x.toFixed(1)} 102V${m % 10 === 0 ? 88 : m % 5 === 0 ? 94 : 98}`;
  if (m % 10 === 0 && m < 140) nums += `<text x="${x + 1.5}" y="96">${m}</text>`;
}
for (let m = 72; m <= 186; m++) {
  const y = 148.1 + (m - 80) * 5.605; if (y < 102 || y > 746) continue;
  tick += `M268 ${y.toFixed(1)}H${m % 10 === 0 ? 255 : m % 5 === 0 ? 260 : 264}`;
  if (m % 10 === 0) nums += `<text transform="translate(255.500 ${y + 1}) rotate(90)">-${m}</text>`;
}
byId('board').innerHTML = `<rect x="252" y="86" width="966" height="661" fill="#f5f5f8"/><rect x="268" y="102" width="950" height="645" fill="#000"/>
<path d="${grid}" stroke="#484848" stroke-width=".8"/>
<path d="M453.500 247.500L970 245.500V637.500H453.500z" fill="#160010"/>
<path d="M455 249L967.500 247.500V634H455z" fill="#f00"/>
<g fill="none" stroke="#100000" stroke-width="4.600" stroke-linejoin="round">${lines}</g>
<g fill="none" stroke="#f00" stroke-width="1.800" stroke-linejoin="round">${lines}</g>
<g fill="#dc0000" stroke="#8c0000" stroke-width=".8">${land}</g>
<g fill="#a9a9b1" stroke="#4d0020" stroke-width="1.200">${pads}</g>
<g fill="none" stroke="#ffd000" stroke-width="1.300">${silk}</g>
<path d="M513.500 291V274.700H572.700V279" fill="none" stroke="#ffe5c8" stroke-width="1.200"/>
<g class="silktxt">${txt}</g>
<path d="M534 331L688 291M545 395L651 417M654 349V393M867 361V453" stroke="#6a35c8" stroke-width=".8"/>
<path d="M675 291.500h7M669 297v5M687 297v5M563 375v-9h5M578 375v-9h-5" fill="none" stroke="#f4d4d4" stroke-width="1.200"/>
<path d="M453.500 247.500L970.500 245.500V637.500H453.500z" fill="none" stroke="#b000b8" stroke-width="1.300"/>
<path d="${tick}" stroke="#999" stroke-width=".8"/><path d="M255 165.500h13" stroke="#3267aa"/><g class="ruler">${nums}</g>`;
```
